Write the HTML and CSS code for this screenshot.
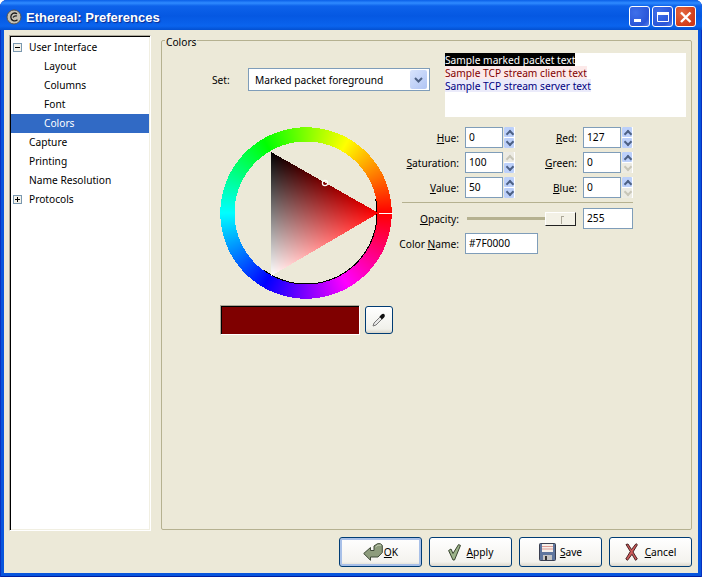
FILE: index.html
```html
<!DOCTYPE html>
<html lang="en">
<head>
  <meta charset="UTF-8">
  <title>Ethereal: Preferences</title>
  <link rel="stylesheet" href="styles.css">
</head>
<body>
  <div class="window">
    <header class="titlebar">
      <svg class="app-icon" width="16" height="16" viewBox="0 0 16 16">
        <circle cx="8" cy="8" r="7" fill="#c4c0b4" stroke="#55524c"/>
        <path d="M11 4.800C8.500 3 4.800 4.500 4.800 8s4 5 6.700 2.800M7 8.500c1-1.500 2.500-2 4-1.500" fill="none" stroke="#1c1c1c" stroke-width="1.300"/>
      </svg>
      <span class="title">Ethereal: Preferences</span>
      <div class="win-buttons">
        <div class="win-btn"><svg width="21" height="21" viewBox="0 0 21 21"><rect x="5" y="13" width="7" height="3" fill="#fff"/></svg></div>
        <div class="win-btn"><svg width="21" height="21" viewBox="0 0 21 21"><path d="M5.500 6.500h11v9h-11z" fill="none" stroke="#fff"/><rect x="5" y="6" width="12" height="3" fill="#fff"/></svg></div>
        <div class="win-btn close"><svg width="21" height="21" viewBox="0 0 21 21"><path d="M6 6.500l9.500 9.500M15.500 6.500L6 16" stroke="#fff" stroke-width="2.400"/></svg></div>
      </div>
    </header>

    <div class="content">
      <div class="main">
        <ul class="tree">
          <li class="node"><span class="expander">
            <svg width="9" height="9" viewBox="0 0 9 9"><rect x=".5" y=".5" width="8" height="8" fill="#f4f2ea" stroke="#7a98b0"/><path d="M2 4.500h5" stroke="#000"/></svg>
          </span>User Interface</li>
          <li class="node child">Layout</li>
          <li class="node child">Columns</li>
          <li class="node child">Font</li>
          <li class="node child selected">Colors</li>
          <li class="node">Capture</li>
          <li class="node">Printing</li>
          <li class="node">Name Resolution</li>
          <li class="node"><span class="expander">
            <svg width="9" height="9" viewBox="0 0 9 9"><rect x=".5" y=".5" width="8" height="8" fill="#f4f2ea" stroke="#7a98b0"/><path d="M2 4.500h5M4.500 2v5" stroke="#000"/></svg>
          </span>Protocols</li>
        </ul>

        <section class="frame">
          <h2 class="frame-label">Colors</h2>
          <div class="top-row">
            <label class="set-label">Set:</label>
            <div class="combo">
              <span class="combo-text">Marked packet foreground</span>
              <span class="combo-arrow">
                <svg width="9" height="6" viewBox="0 0 9 6"><path d="M1 1l3.500 3.500L8 1" fill="none" stroke="#4d6185" stroke-width="2"/></svg>
              </span>
            </div>
            <div class="samples">
              <div class="sample marked">Sample marked packet text</div>
              <div class="sample client">Sample TCP stream client text</div>
              <div class="sample server">Sample TCP stream server text</div>
            </div>
          </div>

          <div class="picker">
            <div class="wheel-col">
              <canvas id="wheel" width="176" height="176"></canvas>
              <div class="swatch-row">
                <div class="swatch"></div>
                <button class="dropper">
                  <svg width="18" height="18" viewBox="0 0 18 18">
                    <path d="M3 15l1-3 6-6 2 2-6 6z" fill="#e8e8e8" stroke="#777"/>
                    <path d="M9.500 5.500l2-2c1-1 2.500-1 3 0s.5 2-.5 3l-2 2z" fill="#111"/>
                  </svg>
                </button>
              </div>
            </div>

            <div class="fields">
              <div class="spin-grid">
                <label class="f-label"><u>H</u>ue:</label>
                <div class="spin"><span class="entry">0</span><span class="stepper"><i class="up"></i><i class="down"></i></span></div>
                <label class="f-label"><u>R</u>ed:</label>
                <div class="spin"><span class="entry">127</span><span class="stepper"><i class="up"></i><i class="down"></i></span></div>

                <label class="f-label"><u>S</u>aturation:</label>
                <div class="spin"><span class="entry">100</span><span class="stepper"><i class="up off"></i><i class="down"></i></span></div>
                <label class="f-label"><u>G</u>reen:</label>
                <div class="spin"><span class="entry">0</span><span class="stepper"><i class="up"></i><i class="down off"></i></span></div>

                <label class="f-label"><u>V</u>alue:</label>
                <div class="spin"><span class="entry">50</span><span class="stepper"><i class="up"></i><i class="down"></i></span></div>
                <label class="f-label"><u>B</u>lue:</label>
                <div class="spin"><span class="entry">0</span><span class="stepper"><i class="up"></i><i class="down off"></i></span></div>
              </div>
              <hr class="sep">
              <div class="opacity-row">
                <label class="f-label opacity-label"><u>O</u>pacity:</label>
                <div class="slider"><div class="trough"></div><div class="thumb"></div></div>
                <span class="entry opacity-entry">255</span>
              </div>
              <div class="name-row">
                <label class="f-label"><span>Color <u>N</u>ame:</span></label>
                <span class="entry name-entry">#7F0000</span>
              </div>
            </div>
          </div>
        </section>
      </div>

      <footer class="actions">
        <button class="btn default ok-btn">
          <svg width="20" height="18" viewBox="0 0 20 18"><path d="M.7 10.500L7.500 4.500v3h3.500V3L14.500.7h3l1.800 1.800v7L15 14H7.500v3.300z" fill="#8d9c7c" stroke="#3f4a38" stroke-linejoin="round"/><path d="M12.500 4l2.500-1.800h3" fill="none" stroke="#c4ceb4"/></svg>
          <span><u>O</u>K</span>
        </button>
        <button class="btn apply-btn">
          <svg width="13" height="17" viewBox="0 0 13 17"><path d="M.6 6.500L3 5l2 4.500L10.500.6l2 .8L6.500 16H5z" fill="#9db38a" stroke="#39452f" stroke-linejoin="round"/></svg>
          <span><u>A</u>pply</span>
        </button>
        <button class="btn save-btn">
          <svg width="17" height="18" viewBox="0 0 17 18"><rect x=".5" y=".5" width="16" height="17" rx="1" fill="#5f769e" stroke="#3a3f50"/><rect x="3" y="1" width="11" height="8" fill="#f6f0ea"/><path d="M3 3.500h11M3 6h11" stroke="#dc9a94"/><rect x="4" y="12" width="9" height="5" fill="#c4c4c4"/><rect x="6" y="13" width="2" height="4" fill="#333"/></svg>
          <span><u>S</u>ave</span>
        </button>
        <button class="btn cancel-btn">
          <svg width="13" height="18" viewBox="0 0 13 18"><path d="M1 1.500L3 1l3.500 5.500L11 .7l1.400 1L8 9l4.300 7-1.800 1.300-3.500-6-4.500 6L.8 16l4.500-7.500z" fill="#cf5a5a" stroke="#4a2424" stroke-linejoin="round"/></svg>
          <span><u>C</u>ancel</span>
        </button>
      </footer>
    </div>
  </div>

  <script src="wheel.js"></script>
</body>
</html>
```

FILE: styles.css
```css
* {
  box-sizing: border-box;
}

html, body {
  margin: 0;
  padding: 0;
}

body {
  width: 702px;
  height: 577px;
  overflow: hidden;
  font-family: "Noto Sans", sans-serif;
  font-size: 10.2px;
  color: #000;
}

.window {
  width: 702px;
  height: 577px;
  display: flex;
  flex-direction: column;
  background: #0855dd;
  border-radius: 7px 7px 0 0;
  overflow: hidden;
  box-shadow: inset 1px 0 #0831c0, inset -1px 0 #0831c0, inset 0 -1px #001ea0;
}

.titlebar {
  height: 30px;
  flex: none;
  display: flex;
  align-items: center;
  padding: 3px 6px 0 6px;
  background: linear-gradient(#0a5fe8 0, #2f8bff 3px, #0d62ea 6px, #0558e2 16px, #0a64ee 26px, #0350d0 30px);
}

.app-icon {
  margin-right: 4px;
}

.title {
  color: #fff;
  font-family: "Liberation Sans", sans-serif;
  font-size: 13px;
  font-weight: bold;
  text-shadow: 1px 1px 1px #0a2a90;
  flex: 1;
  padding-top: 1px;
}

.win-buttons {
  display: flex;
  gap: 2px;
}

.win-btn {
  width: 21px;
  height: 21px;
  border: 1px solid #fff;
  border-radius: 3px;
  background: radial-gradient(circle at 30% 30%, #3f70ea, #2a55d8 70%, #5a82ec);
  overflow: hidden;
}

.win-btn svg {
  display: block;
  margin: -1px;
}

.win-btn.close {
  background: radial-gradient(circle at 30% 30%, #e4683f, #d03a18 75%);
}

.content {
  flex: 1;
  margin: 0 4px 4px;
  background: #ece9d8;
  padding: 5px 6px 6px 5px;
  display: flex;
  flex-direction: column;
  min-height: 0;
}

.main {
  flex: 1;
  display: flex;
  gap: 10px;
  min-height: 0;
}

.tree {
  width: 142px;
  margin: 0;
  list-style: none;
  background: #fff;
  border: 1px solid;
  border-color: #aca899 #fff #fff #aca899;
  box-shadow: inset 1px 1px 0 #000, inset -1px -1px 0 #f1efe2;
  padding: 2px 1px 1px;
}

.node {
  height: 19px;
  line-height: 18px;
  padding-left: 18px;
  position: relative;
}

.node.child {
  padding-left: 33px;
}

.node.selected {
  background: #316ac5;
  color: #fff;
}

.expander {
  position: absolute;
  left: 2px;
  top: 5px;
  line-height: 0;
}

.frame {
  flex: 1;
  position: relative;
  border: 1px solid #b5b190;
  border-radius: 2px;
  margin: 5px 0 1px;
  padding: 12px 4px 0 0;
}

.frame-label {
  position: absolute;
  left: 3px;
  top: -5px;
  margin: 0;
  padding: 0 1px;
  background: #ece9d8;
  font-size: 10.2px;
  font-weight: normal;
  line-height: 12px;
}

.top-row {
  display: flex;
  align-items: flex-start;
}

.set-label {
  margin: 19px 0 0 50px;
  width: 36px;
  line-height: 16px;
}

.combo {
  width: 182px;
  height: 23px;
  margin-top: 15px;
  background: #fff;
  border: 1px solid #7f9db9;
  display: flex;
  align-items: center;
  justify-content: space-between;
  padding: 0 2px 0 6px;
}

.combo-arrow {
  width: 17px;
  height: 19px;
  background: linear-gradient(135deg, #d8e4fc, #b0c4f4);
  border-radius: 2px;
  display: flex;
  align-items: center;
  justify-content: center;
}

.samples {
  width: 241px;
  height: 64px;
  margin-left: 15px;
  background: #fff;
  line-height: 14px;
}

.sample {
  width: fit-content;
  height: 13px;
}

.marked {
  background: #000;
  color: #fff;
}

.client {
  background: #fce9e9;
  color: #7f0000;
}

.server {
  background: #ebebfa;
  color: #00007f;
}

.picker {
  display: flex;
  margin-top: 10px;
}

.wheel-col {
  width: 240px;
  padding-left: 58px;
}

#wheel {
  display: block;
}

.swatch-row {
  display: flex;
  gap: 5px;
  margin-top: 2px;
}

.swatch {
  width: 140px;
  height: 30px;
  background: #7f0000;
  border: 1px solid;
  border-color: #aca899 #fff #fff #aca899;
  box-shadow: inset 1px 1px 0 #000;
}

.dropper {
  width: 28px;
  height: 28px;
  padding: 0;
  margin-top: 1px;
  border: 1px solid #003c74;
  border-radius: 3px;
  background: linear-gradient(#fff, #f0f0ea 85%, #d8d4c8);
  display: flex;
  align-items: center;
  justify-content: center;
}

.fields {
  width: 232px;
  margin-top: -2px;
}

.spin-grid {
  display: grid;
  grid-template-columns: 63px 51px 67px 50px;
  grid-auto-rows: 25px;
  align-items: center;
}

.f-label {
  text-align: right;
  padding-right: 6px;
  white-space: nowrap;
}

.spin {
  display: flex;
  height: 21px;
}

.entry {
  display: block;
  background: #fff;
  border: 1px solid #7f9db9;
  height: 21px;
  line-height: 18px;
  padding-left: 3px;
}

.spin .entry {
  width: 38px;
  flex: none;
}

.stepper {
  width: 11px;
  flex: none;
  margin-left: 1px;
  padding: 0 1px 0 0;
  display: flex;
  flex-direction: column;
  background: #fff;
  gap: 1px;
}

.stepper i {
  flex: 1;
  display: block;
  position: relative;
  background: #bcd0fa;
  border-radius: 1px;
}

.stepper i::after {
  content: "";
  position: absolute;
  left: 3px;
  width: 4px;
  height: 4px;
  border: solid #4d6185;
  transform: rotate(45deg);
}

.stepper .up::after {
  top: 4px;
  border-width: 2px 0 0 2px;
}

.stepper .down::after {
  top: 1px;
  border-width: 0 2px 2px 0;
}

.stepper i.off {
  background: #ecebe3;
}

.stepper i.off::after {
  border-color: #c8c6b8;
}

.sep {
  width: 231px;
  height: 1px;
  margin: 2px 0 5px;
  border: 0;
  background: #b5b190;
}

.opacity-row {
  display: flex;
  align-items: center;
  height: 21px;
}

.opacity-label {
  width: 63px;
}

.slider {
  width: 111px;
  height: 14px;
  position: relative;
  margin-right: 7px;
}

.trough {
  position: absolute;
  left: 2px;
  right: 4px;
  top: 5px;
  height: 3px;
  background: #b5b190;
}

.thumb {
  position: absolute;
  right: 0;
  top: 0;
  width: 31px;
  height: 14px;
  background: #f3f1e6;
  border: 1px solid;
  border-color: #fff #222 #222 #fff;
}

.thumb::after {
  content: "";
  position: absolute;
  left: 15px;
  top: 3px;
  width: 2px;
  height: 7px;
  border-left: 1px solid #aca899;
  border-top: 1px solid #aca899;
}

.opacity-entry {
  width: 50px;
}

.name-row {
  display: flex;
  align-items: center;
  margin-top: 4px;
}

.name-row .f-label {
  width: 63px;
}

.name-row .f-label span {
  margin-left: -6px;
}

.name-entry {
  width: 73px;
}

.actions {
  height: 36px;
  flex: none;
  display: flex;
  justify-content: flex-end;
  gap: 7px;
  padding-top: 6px;
}

.btn {
  width: 83px;
  height: 30px;
  padding: 0;
  border: 1px solid #003c74;
  border-radius: 3px;
  background: linear-gradient(#fff, #f4f3ee 85%, #dcd8cc);
  display: flex;
  align-items: center;
  justify-content: center;
  font: inherit;
  color: #000;
}

.btn.default {
  box-shadow: inset 0 0 0 2px #a8c0e8;
}

.ok-btn {
  gap: 1px;
}

.apply-btn {
  gap: 6px;
}

.save-btn {
  gap: 4px;
}

.cancel-btn {
  gap: 7px;
}
```

FILE: wheel.js
```js
// draw the gtk hsv wheel and triangle, aliased like the original
const canvas = document.getElementById('wheel');
const ctx = canvas.getContext('2d');
const img = ctx.createImageData(canvas.width, canvas.height);

const cx = 86, cy = 86, outer = 85.7, inner = 71.5;
const red = [158.5, 86], black = [51, 25], white = [51, 149];

function hsv(h) {
  const i = Math.floor(h * 6), f = h * 6 - i;
  const table = [[1, f, 0], [1 - f, 1, 0], [0, 1, f], [0, 1 - f, 1], [f, 0, 1], [1, 0, 1 - f]];
  return table[i % 6].map(v => v * 255);
}

function put(x, y, c) {
  const p = (y * canvas.width + x) * 4;
  img.data[p] = c[0]; img.data[p + 1] = c[1]; img.data[p + 2] = c[2]; img.data[p + 3] = 255;
}

const ax = red[0], ay = red[1], bx = black[0], by = black[1], gx = white[0], gy = white[1];
const det = (by - gy) * (ax - gx) + (gx - bx) * (ay - gy);

for (let y = 0; y < canvas.height; y++) {
  for (let x = 0; x < canvas.width; x++) {
    const dx = x + 0.5 - cx, dy = y + 0.5 - cy;
    const r = Math.hypot(dx, dy);
    if (r <= outer && r >= inner) {
      let a = Math.atan2(-dy, dx) / (2 * Math.PI);
      if (a < 0) a += 1;
      put(x, y, hsv(a));
    } else if (r < inner && r >= inner - 1 && Math.atan2(dy, dx) > -0.2 && Math.atan2(dy, dx) < 2.2) {
      put(x, y, [0, 0, 0]);
    }
    const w1 = ((by - gy) * (x + 0.5 - gx) + (gx - bx) * (y + 0.5 - gy)) / det;
    const w2 = ((gy - ay) * (x + 0.5 - gx) + (ax - gx) * (y + 0.5 - gy)) / det;
    const w3 = 1 - w1 - w2;
    if (w1 >= 0 && w2 >= 0 && w3 >= 0) {
      put(x, y, [255 * w1 + 255 * w3, 255 * w3, 255 * w3]);
    }
  }
}
ctx.putImageData(img, 0, 0);

// hue marker
ctx.fillStyle = '#fff';
ctx.fillRect(159, 86, 14, 1);

// value/saturation marker
ctx.strokeStyle = '#fff';
ctx.lineWidth = 1.2;
ctx.beginPath();
ctx.arc(105, 56, 2.6, 0, Math.PI * 2);
ctx.stroke();
```
